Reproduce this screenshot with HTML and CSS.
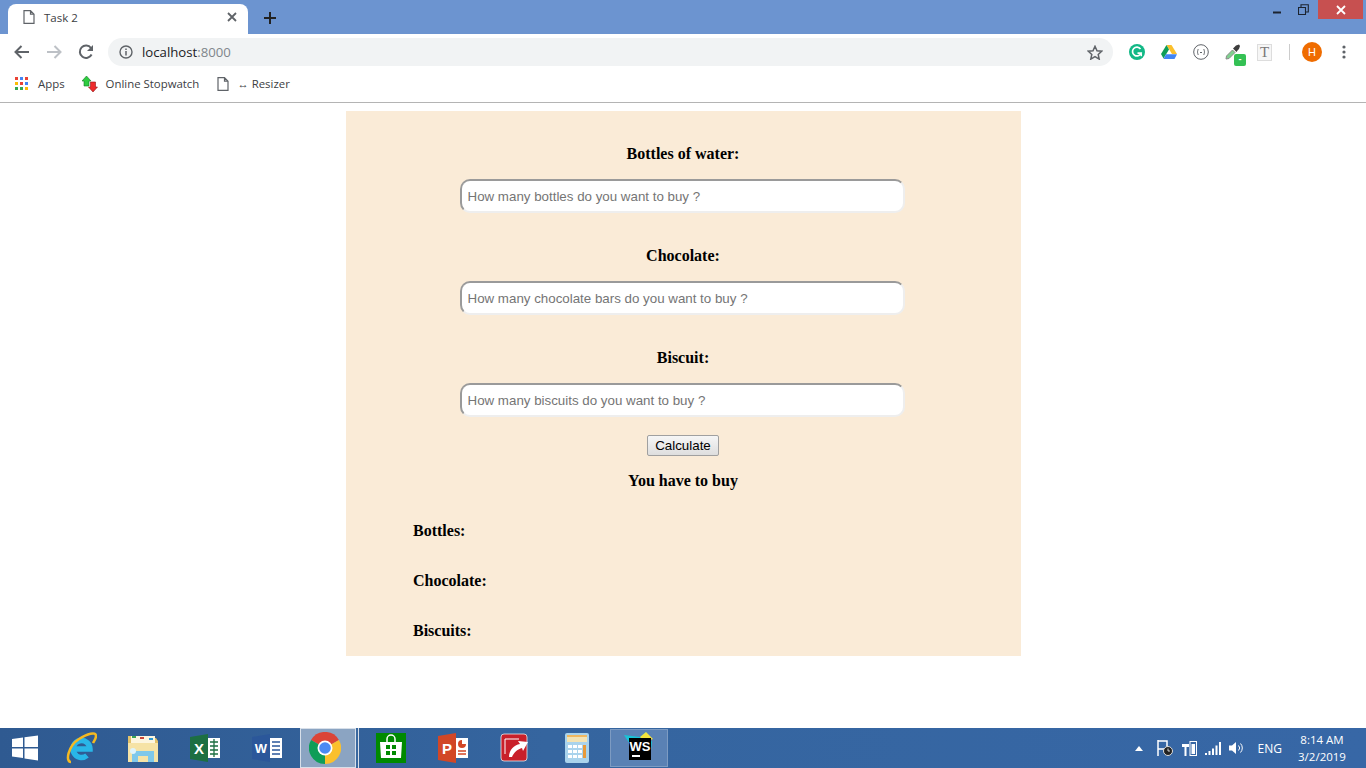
FILE: index.html
```html
<!DOCTYPE html>
<html lang="en">
<head>
    <meta charset="UTF-8">
    <meta name="viewport" content="width=device-width, initial-scale=1.0">
    <title>Task 2</title>
    <link rel="stylesheet" href="styles.css">
</head>
<body>
    <div class="titlebar">
        <div class="tab">
            <svg class="tab-icon" width="12" height="14" viewBox="0 0 12 14"><path d="M1 .7h6.500L11 4.200v9.100H1zM7.500.7v3.500H11" fill="#fff" stroke="#5f6368" stroke-width="1.200"/></svg>
            <span class="tab-title">Task 2</span>
            <svg class="tab-close" width="10" height="10" viewBox="0 0 10 10"><path d="M1 1l8 8M9 1l-8 8" stroke="#5f6368" stroke-width="1.800"/></svg>
        </div>
        <svg class="new-tab" width="12" height="12" viewBox="0 0 12 12"><path d="M6 0v12M0 6h12" stroke="#222" stroke-width="2"/></svg>
        <div class="window-controls">
            <svg class="win-min" width="9" height="3" viewBox="0 0 9 3"><path d="M0 1.500h8" stroke="#1c2430" stroke-width="2"/></svg>
            <svg class="win-restore" width="11" height="11" viewBox="0 0 11 11"><path d="M.5 3.500h7v7h-7zM3 3V.7h7.300V8H8" fill="none" stroke="#1c2430" stroke-width="1.100"/></svg>
            <div class="win-close"><svg width="10" height="10" viewBox="0 0 10 10"><path d="M1 1l8 8M9 1l-8 8" stroke="#fff" stroke-width="1.800"/></svg></div>
        </div>
    </div>

    <div class="toolbar">
        <svg class="nav-icon" width="16" height="14" viewBox="0 0 16 14"><path d="M15 7H2M7.500 1L1.500 7l6 6" fill="none" stroke="#5f6368" stroke-width="2"/></svg>
        <svg class="nav-icon" width="16" height="14" viewBox="0 0 16 14"><path d="M1 7h13M8.500 1l6 6-6 6" fill="none" stroke="#bdc1c6" stroke-width="2"/></svg>
        <svg class="nav-icon" width="16" height="16" viewBox="0 0 16 16"><path d="M13.600 10.500A6.200 6.200 0 1 1 13 4" fill="none" stroke="#5f6368" stroke-width="2"/><path d="M15 1v6H9z" fill="#5f6368"/></svg>
        <div class="omnibox">
            <svg class="info-icon" width="14" height="14" viewBox="0 0 14 14"><circle cx="7" cy="7" r="6" fill="none" stroke="#5f6368" stroke-width="1.400"/><path d="M7 6v4.400M7 3.400v1.600" stroke="#5f6368" stroke-width="1.500"/></svg>
            <span class="url">localhost<span class="url-port">:8000</span></span>
            <svg class="star" width="16" height="15" viewBox="0 0 16 15"><path d="M8 1.300l2 4.400 4.700.5-3.500 3.200 1 4.700L8 11.600l-4.200 2.500 1-4.700L1.300 6.200 6 5.700z" fill="none" stroke="#5f6368" stroke-width="1.500"/></svg>
        </div>
        <div class="extensions">
            <svg width="16" height="16" viewBox="0 0 16 16"><circle cx="8" cy="8" r="8" fill="#12b886"/><path d="M11.500 5A4.400 4.400 0 1 0 12 9.200H8.500" fill="none" stroke="#fff" stroke-width="1.700"/><path d="M12.300 9.200v3" stroke="#fff" stroke-width="1.500"/></svg>
            <svg width="16" height="14" viewBox="0 0 16 14"><path d="M5.500 0h5L16 9h-5z" fill="#fbc02d"/><path d="M5.500 0L0 9l2.500 4.500L8 4.500z" fill="#0f9d58"/><path d="M2.500 14L5 9.200h11L13.500 14z" fill="#4285f4"/></svg>
            <svg width="16" height="16" viewBox="0 0 16 16"><circle cx="8" cy="8" r="7.300" fill="#fff" stroke="#5f6368" stroke-width="1"/><path d="M5.500 5C4 6 5.500 7.500 4 8c1.500.5 0 2 1.500 3M10.500 5c1.500 1 0 2.500 1.500 3-1.500.5 0 2-1.500 3M7 8.500h2" fill="none" stroke="#5f6368"/></svg>
            <div class="dropper">
                <svg width="16" height="16" viewBox="0 0 16 16"><path d="M1 15l.5-3 6-6 2.500 2.500-6 6z" fill="#7fd18f" stroke="#8a8a8a"/><path d="M8 4.500l3.500 3.500 1-1.500L14 5l1-3-1-1.500-3 1-1.500 1.500z" fill="#3d3d3d"/></svg>
                <span class="dropper-badge">-</span>
            </div>
            <div class="font-ext">T</div>
        </div>
        <div class="toolbar-sep"></div>
        <div class="avatar">H</div>
        <svg class="menu-dots" width="4" height="14" viewBox="0 0 4 14"><circle cx="2" cy="2" r="1.600" fill="#5f6368"/><circle cx="2" cy="7" r="1.600" fill="#5f6368"/><circle cx="2" cy="12" r="1.600" fill="#5f6368"/></svg>
    </div>

    <div class="bookmarks">
        <div class="bookmark bookmark-apps">
            <svg width="14" height="14" viewBox="0 0 14 14">
                <rect x="0" y="0" width="3" height="3" fill="#ea4335"/><rect x="5" y="0" width="3" height="3" fill="#4285f4"/><rect x="10" y="0" width="3" height="3" fill="#ea4335"/>
                <rect x="0" y="5" width="3" height="3" fill="#fbbc05"/><rect x="5" y="5" width="3" height="3" fill="#ea4335"/><rect x="10" y="5" width="3" height="3" fill="#4285f4"/>
                <rect x="0" y="10" width="3" height="3" fill="#34a853"/><rect x="5" y="10" width="3" height="3" fill="#34a853"/><rect x="10" y="10" width="3" height="3" fill="#fbbc05"/>
            </svg>
            <span>Apps</span>
        </div>
        <div class="bookmark">
            <svg width="16" height="16" viewBox="0 0 16 16"><path d="M4.500 0L9 5H7v5H2V5H0z" fill="#2ecc40" stroke="#157a26" stroke-width=".6"/><path d="M11 16l-4.500-5h2V6h5v5h2z" fill="#ee2b2b" stroke="#8e1515" stroke-width=".6"/></svg>
            <span>Online Stopwatch</span>
        </div>
        <div class="bookmark">
            <svg width="12" height="14" viewBox="0 0 12 14"><path d="M1 .7h6.500L11 4.200v9.100H1zM7.500.7v3.500H11" fill="#fff" stroke="#5f6368" stroke-width="1.200"/></svg>
            <span>↔ Resizer</span>
        </div>
    </div>

    <main class="page">
        <form class="panel">
            <div class="field">
                <label for="water">Bottles of water:</label>
                <input type="number" id="water" class="qty" placeholder="How many bottles do you want to buy ?">
            </div>
            <div class="field">
                <label for="chocolate">Chocolate:</label>
                <input type="number" id="chocolate" class="qty" placeholder="How many chocolate bars do you want to buy ?">
            </div>
            <div class="field">
                <label for="biscuit">Biscuit:</label>
                <input type="number" id="biscuit" class="qty" placeholder="How many biscuits do you want to buy ?">
            </div>
            <button type="button" class="calc">Calculate</button>
            <h4 class="result-title">You have to buy</h4>
            <div class="result">Bottles:</div>
            <div class="result">Chocolate:</div>
            <div class="result">Biscuits:</div>
        </form>
    </main>

    <div class="taskbar">
        <div class="start">
            <svg width="26" height="26" viewBox="0 0 26 26"><path d="M0 4l11-1.500V12H0zM12.500 2.300L26 .5V12H12.500zM0 13.500h11V23L0 21.500zM12.500 13.500H26v12l-13.500-2z" fill="#fff"/></svg>
        </div>
        <div class="task">
            <svg width="32" height="32" viewBox="0 0 32 32"><path d="M9.500 17h15.500a8.500 8.500 0 1 0-3 6.500" fill="none" stroke="#29b6e8" stroke-width="5.500"/><path d="M6 30C0 30 3 14 14 7 22 2 31-1 31 4c0 3-2 5-3 7" fill="none" stroke="#f5b921" stroke-width="2.500"/></svg>
        </div>
        <div class="task">
            <svg width="32" height="30" viewBox="0 0 32 30"><path d="M1 3h11l2 2h15l2 3v21H1z" fill="#e2c169"/><rect x="4" y="3" width="24" height="7" fill="#fdf6df"/><rect x="5" y="3" width="4" height="2" fill="#3aa655"/><rect x="13" y="4" width="4" height="2" fill="#c9463a"/><rect x="22" y="5" width="4" height="2" fill="#2f9bd6"/><path d="M1 10h30v19H1z" fill="#f6e3a6"/><path d="M5 29V18h22v11h-6v-6H11v6z" fill="#7fc8ea"/><circle cx="6" cy="18" r="3" fill="#dff4fc"/></svg>
        </div>
        <div class="task">
            <svg width="30" height="28" viewBox="0 0 30 28"><path d="M0 3l18-3v28L0 25z" fill="#1d6f42"/><rect x="18" y="4" width="12" height="20" fill="#fff"/><path d="M20 8h8M20 12h8M20 16h8M20 20h8M24 5v18" stroke="#1d6f42" stroke-width="1.300"/><text x="9" y="20" class="icon-letter" font-size="15" text-anchor="middle">X</text></svg>
        </div>
        <div class="task">
            <svg width="30" height="28" viewBox="0 0 30 28"><path d="M0 3l18-3v28L0 25z" fill="#2b579a"/><rect x="18" y="4" width="12" height="20" fill="#fff"/><path d="M20 8h8M20 12h8M20 16h8M20 20h8" stroke="#2b579a" stroke-width="1.300"/><text x="9" y="19" class="icon-letter" font-size="13" text-anchor="middle">W</text></svg>
        </div>
        <div class="task task-chrome">
            <svg width="32" height="32" viewBox="0 0 32 32"><path d="M16 16L2.100 8A16 16 0 0 1 29.900 8z" fill="#db4437"/><path d="M16 16L29.900 8A16 16 0 0 1 16 32z" fill="#fbc02d"/><path d="M16 16V32A16 16 0 0 1 2.100 8z" fill="#0f9d58"/><circle cx="16" cy="16" r="7.500" fill="#fff"/><circle cx="16" cy="16" r="5.800" fill="#4a8af4"/></svg>
        </div>
        <div class="task">
            <svg width="30" height="30" viewBox="0 0 30 30"><rect width="30" height="30" fill="#008a00"/><path d="M11 9V6a4 4 0 0 1 8 0v3" fill="none" stroke="#fff" stroke-width="1.500"/><path d="M4 9h22l-1 16H5z" fill="#fff"/><path d="M10 12h4v4h-4zM16 12h4v4h-4zM10 18h4v4h-4zM16 18h4v4h-4z" fill="#008a00"/></svg>
        </div>
        <div class="task">
            <svg width="30" height="30" viewBox="0 0 30 30"><path d="M0 3l18-3v30L0 27z" fill="#d24726"/><rect x="18" y="5" width="12" height="20" fill="#fff"/><path d="M24 7v4h4a4 4 0 1 1-4-4z" fill="#d24726"/><path d="M20 18h8M20 21h8" stroke="#d24726" stroke-width="1.300"/><text x="9" y="21" class="icon-letter" font-size="15" text-anchor="middle">P</text></svg>
        </div>
        <div class="task">
            <svg width="30" height="30" viewBox="0 0 30 30"><rect x="1" y="1" width="26" height="27" rx="3" fill="#c9202a" stroke="#e8e8e8" stroke-width=".8"/><path d="M5 21V6h14" fill="none" stroke="#fff" stroke-width="1"/><path d="M9 24c0-7 5-12 11-13l-2-3 10 1-5 9-1-3c-4 1-8 4-10 9z" fill="#fff"/></svg>
        </div>
        <div class="task">
            <svg width="24" height="30" viewBox="0 0 24 30"><rect width="24" height="30" rx="2" fill="#a9d3ec"/><rect x="2" y="2" width="20" height="7" fill="#f3e3b3"/><rect x="2" y="2" width="20" height="2" fill="#f0b860"/><path d="M3 12h4v3H3zM8 12h4v3H8zM13 12h4v3h-4zM3 17h4v3H3zM8 17h4v3H8zM13 17h4v3h-4zM3 22h4v3H3zM8 22h4v3H8zM13 22h4v3h-4z" fill="#fff"/><rect x="18" y="12" width="3" height="13" fill="#e89a3a"/></svg>
        </div>
        <div class="task task-open">
            <svg width="32" height="32" viewBox="0 0 32 32"><path d="M1 3l16 2 6-5 6 10-2 17-10 1z" fill="#19c3d6"/><path d="M17 5l6-5 7 7-8 3z" fill="#f5e23c"/><rect x="6" y="6" width="22" height="22" fill="#000"/><rect x="9" y="23" width="8" height="2" fill="#fff"/><text x="17" y="19" class="icon-letter" font-size="13" text-anchor="middle">WS</text></svg>
        </div>
        <div class="tray">
            <svg width="8" height="5" viewBox="0 0 8 5"><path d="M4 0l4 5H0z" fill="#fff"/></svg>
            <svg class="tray-flag" width="16" height="16" viewBox="0 0 16 16"><path d="M1 0v16M1 1h9v8H1" fill="none" stroke="#fff" stroke-width="1.500"/><circle cx="11" cy="11" r="4.500" fill="#222" stroke="#ddd"/><path d="M11 8.500V11h2" fill="none" stroke="#fff" stroke-width=".8"/></svg>
            <svg width="16" height="16" viewBox="0 0 16 16"><path d="M3 0v4M6 0v4M1 4h7v3H5.500v9h-2V7H1z" fill="#fff"/><rect x="9" y="1.500" width="6.500" height="14" fill="none" stroke="#fff"/><rect x="10.500" y="4" width="3.500" height="10" fill="#fff"/></svg>
            <svg width="16" height="13" viewBox="0 0 16 13"><path d="M0 11h2v2H0zM3.500 9h2v4h-2zM7 6.500h2V13H7zM10.500 3.500h2V13h-2zM14 0h2v13h-2z" fill="#fff"/></svg>
            <svg width="16" height="14" viewBox="0 0 16 14"><path d="M0 4.500h3L7 1v12L3 9.500H0z" fill="#fff"/><path d="M9.500 4.500a3.500 3.500 0 0 1 0 5M11.500 2.500a6.500 6.500 0 0 1 0 9" fill="none" stroke="#fff"/></svg>
            <span class="tray-lang">ENG</span>
            <div class="tray-clock"><span>8:14 AM</span><span>3/2/2019</span></div>
        </div>
    </div>
</body>
</html>
```

FILE: styles.css
```css
html, body {
    margin: 0;
    height: 100%;
}
body {
    width: 1366px;
    height: 768px;
    display: flex;
    flex-direction: column;
    overflow: hidden;
    font-family: "Liberation Serif", serif;
    background: #fff;
}

/* browser window */
.titlebar {
    height: 34px;
    background: #6c94d0;
    display: flex;
    align-items: flex-end;
    padding-left: 8px;
    position: relative;
}
.tab {
    width: 240px;
    height: 30px;
    box-sizing: border-box;
    background: #fff;
    border-radius: 8px 8px 0 0;
    display: flex;
    align-items: center;
    padding: 0 11px 4px 15px;
    font: 11.5px "Open Sans", sans-serif;
    color: #3c4043;
}
.tab-title {
    margin-left: 9px;
    flex: 1;
}
.new-tab {
    margin: 0 0 10px 16px;
}
.window-controls {
    position: absolute;
    top: 0;
    right: 3px;
    display: flex;
    align-items: flex-start;
}
.win-min {
    margin: 11px 16px 0 0;
}
.win-restore {
    margin: 4px 9px 0 0;
}
.win-close {
    width: 45px;
    height: 19px;
    background: #c75050;
    display: flex;
    align-items: center;
    justify-content: center;
}
.toolbar {
    height: 36px;
    box-sizing: border-box;
    padding: 0 0 0 14px;
    display: flex;
    align-items: center;
    background: #fff;
}
.nav-icon {
    margin-right: 16px;
}
.omnibox {
    width: 1005px;
    height: 28px;
    box-sizing: border-box;
    margin-left: -2px;
    background: #f1f3f4;
    border-radius: 14px;
    display: flex;
    align-items: center;
    padding: 0 10px 0 11px;
}
.info-icon {
    margin-right: 9px;
}
.url {
    flex: 1;
    font: 13.2px "Open Sans", sans-serif;
    color: #202124;
}
.url-port {
    color: #80868b;
}
.extensions {
    display: flex;
    align-items: center;
    gap: 16px;
    margin-left: 16px;
}
.dropper {
    width: 16px;
    height: 16px;
    position: relative;
}
.dropper-badge {
    position: absolute;
    left: 9px;
    top: 10px;
    width: 12px;
    height: 12px;
    background: #34c154;
    border-radius: 2px;
    color: #fff;
    font: bold 9px/11px "Liberation Sans", sans-serif;
    text-align: center;
}
.font-ext {
    width: 13px;
    height: 15px;
    border: 1px solid #ddd;
    background: #f6f6f6;
    color: #777;
    font: 15px/15px "Liberation Serif", serif;
    text-align: center;
}
.toolbar-sep {
    width: 1px;
    height: 16px;
    background: #ccc;
    margin: 0 12px 0 17px;
}
.avatar {
    width: 20px;
    height: 20px;
    border-radius: 50%;
    background: #ef6c00;
    color: #fff;
    font: 11px/20px "Liberation Sans", sans-serif;
    text-align: center;
}
.menu-dots {
    margin-left: 20px;
}
.bookmarks {
    height: 33px;
    box-sizing: border-box;
    border-bottom: 1px solid #b4b4b4;
    padding: 0 0 5px 15px;
    display: flex;
    align-items: center;
    font: 11.4px "Open Sans", sans-serif;
    color: #3c4043;
}
.bookmark {
    display: flex;
    align-items: center;
    gap: 8px;
    margin-right: 18px;
}
.bookmark-apps {
    gap: 9px;
    margin-right: 17px;
}

/* page content */
.page {
    flex: 1;
    display: flex;
    justify-content: center;
    padding-top: 8px;
}
.panel {
    width: 675px;
    height: 545px;
    box-sizing: border-box;
    background: #faebd7;
    display: flex;
    flex-direction: column;
    padding-top: 34px;
    align-items: center;
}
.field {
    display: flex;
    flex-direction: column;
    align-items: center;
    height: 102px;
}
.field label {
    font-weight: bold;
    font-size: 16px;
    line-height: 18px;
    margin-bottom: 16px;
}
.qty {
    width: 445px;
    height: 34px;
    margin-right: 2px;
    box-sizing: border-box;
    border: 2px solid;
    border-color: #9a9a9a #eee #eee #9a9a9a;
    border-radius: 10px;
    background: #fff;
    padding: 1px 5px 1px 6px;
    font: 13.33px "Liberation Sans", sans-serif;
    outline: none;
}
.qty::placeholder {
    color: #757575;
    opacity: 1;
}
.calc {
    width: 72px;
    height: 21px;
    margin-top: -16px;
    padding: 0;
    font: 13.33px "Liberation Sans", sans-serif;
    color: #000;
    border: 1px solid #a0a0a0;
    border-radius: 2px;
    background: linear-gradient(#f6f6f6, #dedede);
}
.result-title {
    margin: 16px 0 0;
    font-size: 16px;
    line-height: 18px;
}
.result {
    align-self: flex-start;
    margin: 32px 0 0 67.500px;
    font-weight: bold;
    font-size: 16px;
    line-height: 18px;
}

/* windows taskbar */
.taskbar {
    height: 40px;
    flex-shrink: 0;
    display: flex;
    align-items: center;
    background: linear-gradient(90deg, #2f5a91, #35659f 40%, #3767a6);
}
.start {
    width: 50px;
    display: flex;
    justify-content: center;
}
.task {
    width: 62px;
    height: 40px;
    display: flex;
    align-items: center;
    justify-content: center;
    box-sizing: border-box;
}
.task-chrome {
    width: 56px;
    margin: 0 4px 0 2px;
    padding-right: 6px;
    background: #8ba4c2;
    border: 1px solid #d7dfe9;
    box-shadow: 2px 0 0 #3a689f, 3px 0 0 #d7dfe9;
}
.task-open {
    width: 58px;
    height: 38px;
    margin-left: 2px;
    background: #5a81b4;
    border: 1px solid #7d9bc2;
}
.icon-letter {
    font-family: "Liberation Sans", sans-serif;
    font-weight: bold;
    fill: #fff;
}
.tray {
    margin-left: auto;
    display: flex;
    align-items: center;
    gap: 8px;
    padding-right: 19px;
    color: #fff;
    font: 12px "Open Sans", sans-serif;
}
.tray-flag {
    margin-left: 6px;
}
.tray-lang {
    margin-left: 5px;
}
.tray-clock {
    display: flex;
    flex-direction: column;
    align-items: center;
    width: 50px;
    margin-left: 7px;
    font-size: 11.5px;
    line-height: 17px;
}
```
